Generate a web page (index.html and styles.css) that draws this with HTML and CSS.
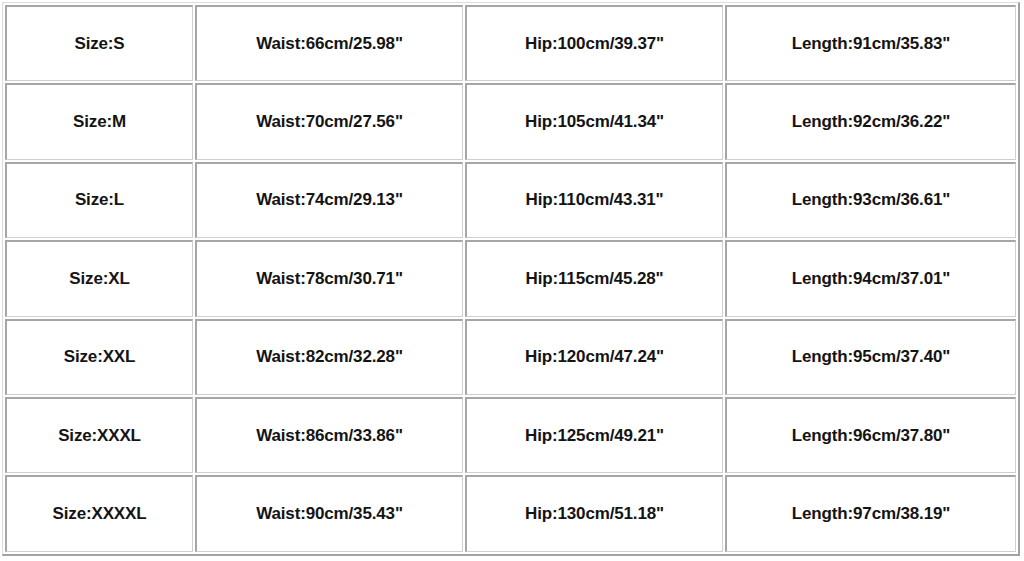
FILE: index.html
```html
<!DOCTYPE html>
<html>
<head>
<meta charset="utf-8">
<link rel="stylesheet" href="styles.css">
</head>
<body>
<table class="chart">
  <colgroup>
    <col class="c1"><col class="c2"><col class="c3"><col class="c4">
  </colgroup>
  <tr><td>Size:S</td><td>Waist:66cm/25.98"</td><td>Hip:100cm/39.37"</td><td>Length:91cm/35.83"</td></tr>
  <tr><td>Size:M</td><td>Waist:70cm/27.56"</td><td>Hip:105cm/41.34"</td><td>Length:92cm/36.22"</td></tr>
  <tr><td>Size:L</td><td>Waist:74cm/29.13"</td><td>Hip:110cm/43.31"</td><td>Length:93cm/36.61"</td></tr>
  <tr><td>Size:XL</td><td>Waist:78cm/30.71"</td><td>Hip:115cm/45.28"</td><td>Length:94cm/37.01"</td></tr>
  <tr><td>Size:XXL</td><td>Waist:82cm/32.28"</td><td>Hip:120cm/47.24"</td><td>Length:95cm/37.40"</td></tr>
  <tr><td>Size:XXXL</td><td>Waist:86cm/33.86"</td><td>Hip:125cm/49.21"</td><td>Length:96cm/37.80"</td></tr>
  <tr><td>Size:XXXXL</td><td>Waist:90cm/35.43"</td><td>Hip:130cm/51.18"</td><td>Length:97cm/38.19"</td></tr>
</table>
</body>
</html>
```

FILE: styles.css
```css
html, body {
  margin: 0;
  padding: 0;
  background: #ffffff;
}

body {
  padding: 2px 0 0 2px;
  font-family: "Liberation Sans", Arial, sans-serif;
}

.chart {
  table-layout: fixed;
  width: 1018px;
  border-collapse: separate;
  border-spacing: 2px;
  border-style: solid;
  border-width: 1px 2px 2px 1px;
  border-color: #dcdcdc #a2a2a2 #a2a2a2 #dcdcdc;
}

.c1 { width: 188px; }
.c2 { width: 268px; }
.c3 { width: 258px; }
.c4 { width: 291px; }

.chart td {
  box-sizing: border-box;
  height: 76.4px;
  padding: 0;
  text-align: center;
  vertical-align: middle;
  border-style: solid;
  border-width: 2px 1px 1px 2px;
  border-color: #a6a6a6 #cfcfcf #cfcfcf #a6a6a6;
  font-size: 17px;
  font-weight: bold;
  letter-spacing: -0.15px;
  color: #141414;
  white-space: nowrap;
}
```
